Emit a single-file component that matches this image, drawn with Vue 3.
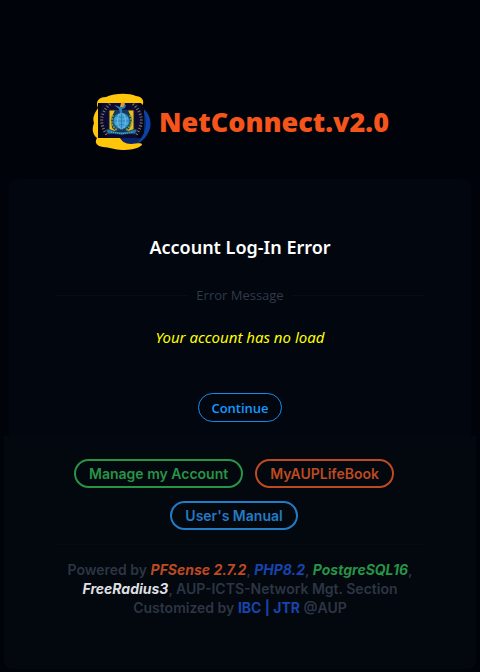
<template>
  <main class="page">
    <header class="brand">
      <svg class="logo" viewBox="0 0 60 60" aria-hidden="true">
        <path d="M49 15C57 18 61 28 59 36C56 47 47 55 34 53L28 47L48 44Z" fill="#0d43a8" />
        <path d="M49 15C56 22 57 34 51 45L46 52L34 53L28 47L48 44Z" fill="#0a2366" />
        <path d="M7 16C4 9 8 5 15 5C24 1 38 1 45 4C53 5 54 11 50 15L46 18H10V44H28C30 49 34 52 40 52C45 52 51 50 51 53C47 57 39 58 31 58C24 58 18 55 12 55C6 54 3 51 6 46C1 42 1 36 3 31C1 25 4 21 7 16Z" fill="#ffc60a" />
        <path d="M7 11H50L53 15V41L50 46H7Z" fill="#040713" />
        <path d="M12 11H47Q57 28 45 46H17Q3 29 12 11Z" fill="#0a0a32" />
        <path d="M19 12Q4 26 16 43" fill="none" stroke="#8a7a58" stroke-width="3" stroke-dasharray="1 2" />
        <path d="M42 12Q57 26 45 43" fill="none" stroke="#8a7a58" stroke-width="3" stroke-dasharray="1 2" />
        <path d="M18 18H43V40H18Z" fill="#edbd1b" stroke="#171a34" />
        <path d="M24 18H37L41 27L39 36L35 40H26L21 36L20 27Z" fill="#17375c" />
        <path d="M22 23Q18 33 26 38M39 23Q43 33 35 38" fill="none" stroke="#779e3c" stroke-width="2" stroke-dasharray="2 1" />
        <circle cx="30.5" cy="29" r="8" fill="#46a5dc" stroke="#1b6999" />
        <path d="M23 29H38M30.5 21V37M25 24Q30.5 27 36 24M25 34Q30.5 31 36 34" fill="none" stroke="#216f9b" stroke-width=".6" />
        <ellipse cx="30.5" cy="29" rx="4" ry="8" fill="none" stroke="#9acddd" stroke-width=".6" />
        <path d="M23 13L29 15L32 12L35 13L34 16L31 17V21H29L28 17Z" fill="#2581bd" />
        <path d="M29 15L30 11L33 10L34 12L32 15Z" fill="#e69a27" />
        <path d="M17 37Q23 40 30.5 40Q38 40 44 37L46 38L44 42Q37 41 31 43Q24 41 17 42L15 38Z" fill="#237ca8" stroke="#102548" stroke-width=".7" />
        <path d="M20 40Q31 43 42 40" fill="none" stroke="#79b0bd" stroke-dasharray="1 1" />
      </svg>
      <h1>NetConnect.v2.0</h1>
    </header>

    <section class="card error-card">
      <h2>Account Log-In Error</h2>
      <div class="divider"><span>Error Message</span></div>
      <p class="message">Your account has no load</p>
      <button type="button" class="continue">Continue</button>
    </section>

    <footer class="card footer">
      <nav class="links">
        <a v-for="link in links" :key="link.label" href="#" :class="['pill', link.color]">{{ link.label }}</a>
      </nav>
      <hr />
      <p class="credits">
        Powered by <em class="orange">PFSense 2.7.2</em>, <em class="navy">PHP8.2</em>, <em class="green">PostgreSQL16</em>,<br />
        <em class="white">FreeRadius3</em>, AUP-ICTS-Network Mgt. Section<br />
        Customized by <strong class="navy">IBC | JTR</strong> @AUP
      </p>
    </footer>
  </main>
</template>

<script setup>
const links = [
  { label: 'Manage my Account', color: 'green' },
  { label: 'MyAUPLifeBook', color: 'orange' },
  { label: "User's Manual", color: 'blue' }
]
</script>

<style>
body {
  margin: 0;
  background: #01030b;
}
</style>

<style scoped>
.page {
  box-sizing: border-box;
  min-height: 100vh;
  padding: 92px 4px 4px;
  background: #01030b;
  font-family: "Noto Sans", "Open Sans", sans-serif;
}

.brand {
  display: flex;
  align-items: center;
  justify-content: center;
  gap: 8px;
  height: 60px;
}

.logo {
  width: 60px;
  height: 60px;
}

h1 {
  margin: 0;
  color: #f5551b;
  font-family: "Open Sans", "Noto Sans", sans-serif;
  font-size: 27px;
  font-weight: 800;
  line-height: 38px;
}

.card {
  background: #02060e;
  text-align: center;
}

.error-card {
  margin: 27px 5px 0;
  padding: 56px 46px 14px;
  border-radius: 8px 8px 0 0;
}

h2 {
  margin: 0;
  color: #fff;
  font-size: 18px;
  font-weight: 600;
  line-height: 24px;
}

.divider {
  display: flex;
  align-items: center;
  gap: 8px;
  margin-top: 26px;
  color: #303a49;
  font-family: "Open Sans", "Noto Sans", sans-serif;
  font-size: 13px;
  line-height: 20px;
}

.divider::before,
.divider::after {
  content: "";
  flex: 1;
  border-top: 1px solid #070c17;
}

.message {
  margin: 20px 0 44px;
  color: #ff0;
  font-size: 15px;
  font-style: italic;
  line-height: 24px;
}

.continue {
  height: 29px;
  padding: 0 12px;
  border: 1px solid #168ce8;
  border-radius: 15px;
  background: transparent;
  color: #159aff;
  font: 600 13px/20px "Open Sans", "Noto Sans", sans-serif;
  cursor: pointer;
}

.footer {
  padding: 23px 51px 52px;
  border-radius: 0 0 8px 8px;
  background: #03070e;
  font-family: Inter, sans-serif;
}

.links {
  display: flex;
  flex-wrap: wrap;
  justify-content: center;
  row-gap: 13px;
}

.pill {
  margin-right: 12px;
  padding: 3px 13px;
  border: 2px solid currentColor;
  border-radius: 15px;
  font-size: 14px;
  font-weight: 600;
  line-height: 19px;
  text-decoration: none;
}

hr {
  margin: 14px 0 15px;
  border: 0;
  border-top: 1px solid #060b13;
}

.credits {
  margin: 0;
  color: #2d3544;
  font-size: 14px;
  font-weight: 600;
  line-height: 19px;
}

.credits em,
.credits strong {
  font-weight: 700;
}

.green {
  color: #279446;
}

.orange {
  color: #bd4a20;
}

.blue {
  color: #237bc4;
}

.navy {
  color: #1744ad;
}

.white {
  color: #dedfe1;
}
</style>
